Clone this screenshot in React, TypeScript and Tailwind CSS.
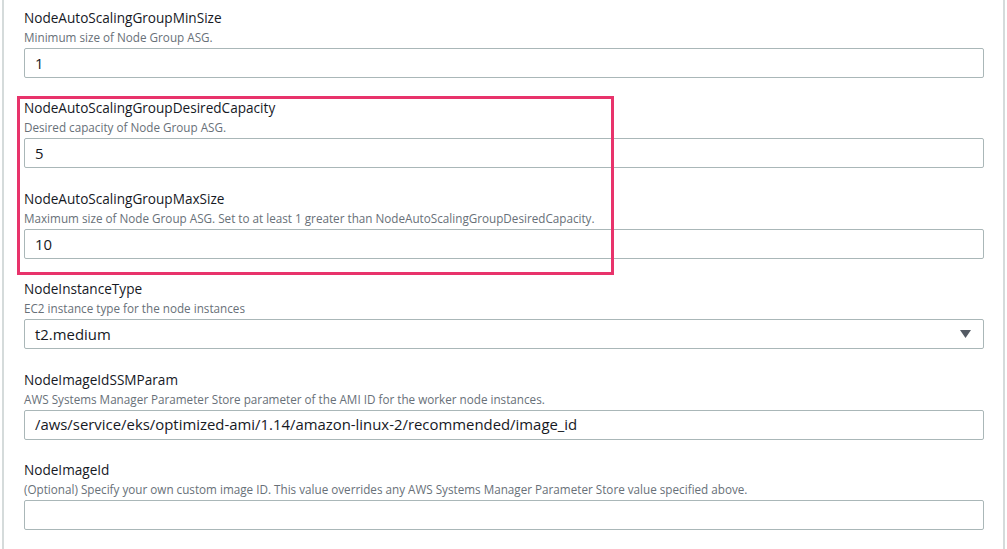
import React from "react";

type Field = { label: string; desc: string; value: string; select?: boolean };

const fields: Field[] = [
  { label: "NodeAutoScalingGroupMinSize", desc: "Minimum size of Node Group ASG.", value: "1" },
  { label: "NodeAutoScalingGroupDesiredCapacity", desc: "Desired capacity of Node Group ASG.", value: "5" },
  {
    label: "NodeAutoScalingGroupMaxSize",
    desc: "Maximum size of Node Group ASG. Set to at least 1 greater than NodeAutoScalingGroupDesiredCapacity.",
    value: "10",
  },
  { label: "NodeInstanceType", desc: "EC2 instance type for the node instances", value: "t2.medium", select: true },
  {
    label: "NodeImageIdSSMParam",
    desc: "AWS Systems Manager Parameter Store parameter of the AMI ID for the worker node instances.",
    value: "/aws/service/eks/optimized-ami/1.14/amazon-linux-2/recommended/image_id",
  },
  {
    label: "NodeImageId",
    desc: "(Optional) Specify your own custom image ID. This value overrides any AWS Systems Manager Parameter Store value specified above.",
    value: "",
  },
];

export default function App() {
  return (
    <div
      className="relative h-[549px] w-[1007px] overflow-hidden bg-white"
      style={{ fontFamily: '"Open Sans", "Liberation Sans", Arial, sans-serif' }}
    >
      <div className="mx-[2px] h-full border-x-2 border-[#d5dbdb] pl-[20px] pr-[19px] pt-[8px]">
        <div className="flex flex-col gap-[20.4px]">
          {fields.map((f) => (
            <div key={f.label} className="flex flex-col">
              <div className="text-[13.6px] leading-[20px] text-[#16191f]">{f.label}</div>
              <div className="mt-[1px] text-[11.7px] leading-[16px] text-[#687078]">{f.desc}</div>
              <div className="mt-[3px] flex h-[30px] items-center justify-between rounded-[2px] border border-[#aab7b8] pl-[10px] pr-[12px] text-[14.9px] text-[#16191f]">
                <span>{f.value}</span>
                {f.select && (
                  <svg width="11" height="8" viewBox="0 0 11 8">
                    <path d="M0 0 H11 L5.5 8 Z" fill="#545b64" />
                  </svg>
                )}
              </div>
            </div>
          ))}
        </div>
      </div>
      <div className="pointer-events-none absolute left-[17px] top-[96px] h-[179px] w-[597px] border-[3px] border-[#e8336b]" />
    </div>
  );
}
